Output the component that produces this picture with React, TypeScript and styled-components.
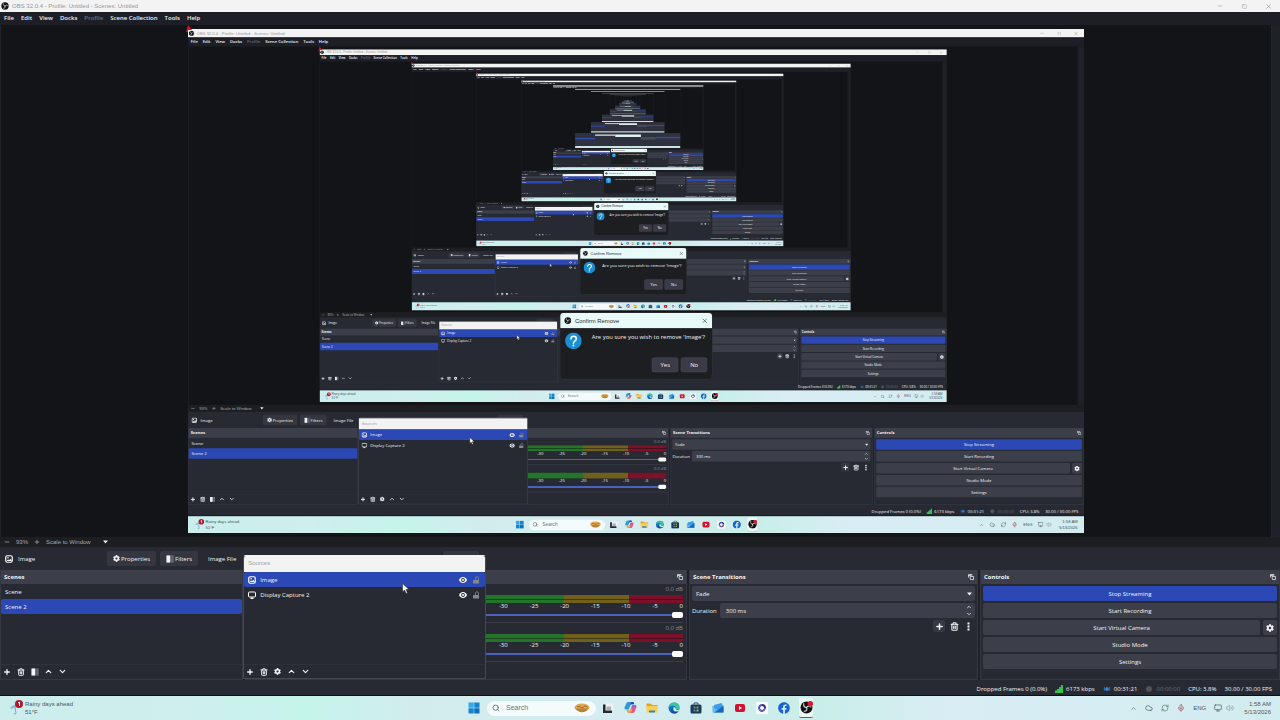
import React, { useId } from "react";
import styled, { createGlobalStyle, css } from "styled-components";
import { ChevronDown, ChevronUp, Cloud, Mic, Minus, Monitor, Plus, Search, Square, Trash2, Volume2, X, RefreshCw } from "lucide-react";
import { FaCog, FaFacebook } from "react-icons/fa";

const c = {
  window: "#1f2128",
  panel: "#272a33",
  raised: "#3c3e4a",
  blue: "#2b48b5",
  canvas: "#131418",
  line: "#353843",
  text: "#f2f3f6",
  mute: "#8b8d96",
  caption: "#f3f3f3",
};

const systemFont = `"Liberation Sans", Arial, sans-serif`;

const SCALE = 0.7;
const LAST_MIRROR = 14;
const FIRST_WITH_DIALOG = 2;
const FIRST_SILHOUETTE = 7;

const GlobalStyle = createGlobalStyle`
  *, *::before, *::after { box-sizing: border-box; }
  body { margin: 0; overflow: hidden; background: ${c.window}; }
  button, input, select { font: inherit; color: inherit; margin: 0; padding: 0; border: 0; background: none; }
  ul { list-style: none; margin: 0; padding: 0; }
  h2, p { margin: 0; font-size: inherit; }
  svg { display: block; flex: none; }
`;

const Screen = styled.div`
  position: relative;
  display: flex;
  flex-direction: column;
  width: 100vw;
  height: 100vh;
  overflow: hidden;
  background: ${c.window};
  color: ${c.text};
  font: 500 6px/8px "Open Sans", "Noto Sans", sans-serif;
  cursor: default;
`;

const TitleBar = styled.header`
  display: flex;
  align-items: center;
  gap: 3px;
  flex: none;
  height: 12px;
  padding: 0 8px 0 1px;
  background: ${c.caption};
  color: #96979b;
  font-family: ${systemFont};
`;

const TitleText = styled.span`
  flex: 1;
`;

const CaptionButtons = styled.div`
  display: flex;
  gap: 16px;
`;

const CaptionButton = styled.button`
  display: grid;
  place-items: center;
  width: 8px;
  height: 8px;
  color: #8c8c8c;
`;

const MenuBar = styled.nav`
  display: flex;
  align-items: center;
  gap: 7px;
  flex: none;
  height: 13px;
  padding: 0 4px 2px;
  background: #1d1e26;
  font-weight: 600;
`;

const MenuItem = styled.button<{ $off?: boolean }>`
  color: ${(p) => (p.$off ? "#6d6f78" : c.text)};
`;

const Preview = styled.main`
  display: flex;
  align-items: center;
  justify-content: center;
  flex: 1;
  min-height: 0;
  margin-left: 1px;
  border-right: 1px solid #24262c;
  margin-right: 8px;
  background: ${c.canvas};
  overflow: hidden;
`;

const MirrorFrame = styled.div`
  position: relative;
  flex: none;
  width: ${SCALE * 100}vw;
  height: ${SCALE * 100}vh;
`;

const MirrorSurface = styled.div`
  width: 100vw;
  height: 100vh;
  transform: scale(${SCALE});
  transform-origin: 0 0;
`;

const CornerHandle = styled.svg`
  position: absolute;
  left: -2px;
  top: -4px;
`;

const ZoomBar = styled.div`
  display: flex;
  align-items: center;
  gap: 6px;
  flex: none;
  height: 10px;
  padding: 0 4px;
  background: #1d1e22;
  color: #a5a6ac;
  font-family: ${systemFont};
`;

const ZoomMode = styled.button`
  display: flex;
  align-items: center;
  gap: 12px;
`;

const ContextBar = styled.div`
  display: flex;
  align-items: center;
  flex: none;
  height: 23px;
  padding: 0 5px;
  background: ${c.panel};
`;

const SourceName = styled.div`
  display: flex;
  align-items: center;
  gap: 5px;
  width: 102px;
`;

const ContextButton = styled.button`
  display: flex;
  align-items: center;
  justify-content: center;
  gap: 1px;
  min-width: 36px;
  height: 15px;
  padding: 0 6px;
  margin-right: 4px;
  border-radius: 2px;
  background: #343640;
`;

const FieldLabel = styled.label`
  margin-left: 6px;
`;

const PathInput = styled.input`
  width: 15%;
  height: 13px;
  margin: 0 4px 0 12px;
  border-radius: 2px;
`;

const Docks = styled.div`
  display: grid;
  grid-template-columns: 243fr 442fr 289fr 300fr;
  gap: 2px;
  flex: none;
  height: 110px;
  background: ${c.window};
`;

const DockBox = styled.section`
  display: flex;
  flex-direction: column;
  min-width: 0;
  padding-bottom: 1px;
  background: ${c.panel};
  border: 1px solid ${c.line};
  border-top: 0;
`;

const DockHeader = styled.header`
  display: flex;
  align-items: center;
  justify-content: space-between;
  flex: none;
  height: 14px;
  padding: 0 3px;
  background: ${c.raised};
  font-weight: 700;
`;

const List = styled.ul`
  flex: 1;
`;

const ListRow = styled.li<{ $on?: boolean }>`
  display: flex;
  align-items: center;
  gap: 4px;
  height: 15px;
  padding: 0 5px 0 4px;
  border-radius: 2px;
  background: ${(p) => (p.$on ? c.blue : "transparent")};
`;

const Grow = styled.span`
  flex: 1;
`;

const ToolRow = styled.div`
  display: flex;
  align-items: center;
  gap: 5px;
  flex: none;
  height: 14px;
  padding: 0 1px;
  border-top: 1px solid #2e313b;
`;

const ToolButton = styled.button<{ $filled?: boolean }>`
  display: grid;
  place-items: center;
  width: ${(p) => (p.$filled ? 12 : 9)}px;
  height: 12px;
  border-radius: 2px;
  background: ${(p) => (p.$filled ? "#363843" : "none")};
`;

const Channel = styled.div`
  display: flex;
  flex-direction: column;
  height: 39px;
  margin-right: 3px;
  padding-left: 76px;
  border-bottom: 1px solid #3a3d48;
`;

const Level = styled.span`
  padding-top: 1px;
  height: 11px;
  text-align: right;
  color: ${c.mute};
`;

const Meter = styled.div`
  height: 8px;
  background:
    linear-gradient(transparent 0 4px, rgba(10, 12, 16, 0.45) 4px 5px, transparent 5px),
    linear-gradient(to left, #7d1129 0 15%, #71601c 15% 33%, #24742a 33%);
`;

const Ticks = styled.div`
  display: flex;
  justify-content: space-between;
  align-self: flex-end;
  width: 51%;
  height: 7px;
  line-height: 7px;
`;

const Fader = styled.input`
  appearance: none;
  width: 100%;
  height: 8px;
  margin-top: 1px;
  background: linear-gradient(transparent 0 3px, #4b61bd 3px 5px, transparent 5px);
  &::-webkit-slider-thumb {
    appearance: none;
    width: 11px;
    height: 6px;
    border-radius: 2px;
    background: #fff;
  }
`;

const DockBody = styled.div`
  display: flex;
  flex-direction: column;
  gap: 2px;
  padding: 2px 2px 0;
`;

const FieldRow = styled.div`
  display: flex;
  align-items: center;
  gap: 3px;
`;

const FieldBox = styled.div`
  display: flex;
  align-items: center;
  flex: 1 0 auto;
  height: 15px;
  padding: 0 3px 0 4px;
  border-radius: 2px;
  background: ${c.raised};
`;

const Select = styled.select`
  appearance: none;
  flex: 1;
  outline: 0;
`;

const SpinInput = styled.input`
  flex: 1;
  min-width: 0;
  padding-left: 2px;
  outline: 0;
`;

const SpinButtons = styled.div`
  display: grid;
  gap: 1px;
`;

const EndRow = styled.div`
  display: flex;
  justify-content: flex-end;
  gap: 5px;
  padding-right: 2px;
`;

const ControlButton = styled.button<{ $active?: boolean; $square?: boolean }>`
  display: grid;
  place-items: center;
  height: 15px;
  border-radius: 2px;
  background: ${(p) => (p.$active ? c.blue : c.raised)};
  ${(p) => (p.$square ? css`width: 14px;` : css`flex: 1 0 auto;`)}
`;

const StatusBar = styled.footer`
  display: flex;
  align-items: center;
  justify-content: flex-end;
  gap: 8px;
  flex: none;
  height: 16px;
  padding: 2px 8px 0 0;
  background: ${c.panel};
  border-bottom: 1px solid #0e0f13;
`;

const StatusItem = styled.span<{ $off?: boolean }>`
  display: flex;
  align-items: center;
  gap: 3px;
  color: ${(p) => (p.$off ? "#686a73" : c.text)};
`;

const TaskBar = styled.div`
  display: grid;
  grid-template-columns: 1fr auto 1fr;
  align-items: center;
  flex: none;
  height: 24px;
  background: linear-gradient(to right, #cbeeed, #cfeeee 14%, #c4f4ea 24%, #d2ecee 32%, #d5ecf0 50%, #c9eee9 64%, #d8edf4 74%, #d3ecf0);
  color: #4a5560;
  font-family: ${systemFont};
`;

const Weather = styled.div`
  display: flex;
  align-items: center;
  gap: 2px;
  padding-left: 9px;
`;

const TwoLines = styled.p<{ $right?: boolean }>`
  text-align: ${(p) => (p.$right ? "right" : "left")};
`;

const Apps = styled.div`
  display: flex;
  align-items: center;
  gap: 8px;
`;

const AppButton = styled.button<{ $active?: boolean }>`
  display: grid;
  place-items: center;
  width: 14px;
  height: 20px;
  border-radius: 2px;
  background: ${(p) => (p.$active ? "rgba(255, 255, 255, 0.6)" : "none")};
  border-bottom: 1px solid ${(p) => (p.$active ? "#c4314b" : "transparent")};
`;

const SearchBox = styled.label`
  display: flex;
  align-items: center;
  gap: 6px;
  width: 109px;
  height: 15px;
  padding: 0 6px 0 5px;
  margin: 0 -3px 0 -2px;
  border-radius: 8px;
  background: #f3fbfc;
  color: #3c464e;
`;

const SearchInput = styled.input`
  flex: 1;
  min-width: 0;
  font-size: 7px;
  outline: 0;
  &::placeholder { color: #6b757c; opacity: 1; }
`;

const Tray = styled.div`
  display: flex;
  align-items: center;
  justify-content: flex-end;
  gap: 8px;
  padding-right: 9px;
`;

const TrayPair = styled.span`
  display: flex;
  gap: 4px;
  margin-right: 2px;
`;

const FloatingDock = styled.section`
  position: absolute;
  left: 19%;
  bottom: 41px;
  display: flex;
  flex-direction: column;
  width: 19%;
  height: 124px;
  border: 1px solid #454853;
  border-top-color: ${c.caption};
  border-radius: 3px 3px 0 0;
  background: ${c.panel};
  overflow: hidden;
`;

const FloatingTitle = styled.header`
  display: flex;
  align-items: center;
  flex: none;
  height: 16px;
  padding: 0 4px 2px;
  background: ${c.caption};
  color: #a0a1a5;
  font-family: ${systemFont};
`;

const RowIcons = styled.span`
  display: flex;
  gap: 5px;
`;

const Pointer = styled.svg`
  position: absolute;
  left: 31%;
  bottom: 126px;
  margin-left: 5px;
`;

const Dialog = styled.div`
  position: absolute;
  left: 38%;
  bottom: 46px;
  display: flex;
  flex-direction: column;
  width: 312px;
  height: 137px;
  margin-left: 4px;
  border: 1px solid #3a3b42;
  border-radius: 8px;
  background: #1d1e22;
  overflow: hidden;
  font-size: 12px;
  line-height: 16px;
`;

const DialogTitle = styled.header`
  display: flex;
  align-items: center;
  gap: 7px;
  height: 31px;
  flex: none;
  padding: 0 8px;
  background: #e9fbf8;
  color: #2a2c30;
  font-family: ${systemFont};
  font-weight: 400;
`;

const DialogBody = styled.div`
  display: flex;
  gap: 20px;
  flex: 1;
  padding: 9px 8px 0 10px;
`;

const DialogText = styled.p`
  padding-top: 2px;
`;

const DialogActions = styled.div`
  display: flex;
  justify-content: flex-end;
  gap: 5px;
  padding: 0 10px 14px;
`;

const DialogButton = styled.button`
  width: 54px;
  height: 30px;
  border: 1px solid #4e505e;
  border-radius: 4px;
  background: #3a3b47;
`;

const FarTitle = styled.div`
  flex: none;
  height: 13px;
  background: #e6e7e9;
`;

const FarStage = styled.div`
  display: flex;
  align-items: center;
  justify-content: center;
  flex: 1;
  min-height: 0;
  padding-top: 12px;
  overflow: hidden;
  background: ${c.canvas};
`;

const FarDocks = styled.div`
  display: grid;
  grid-template-columns: 243fr 243fr 311fr 178fr 300fr;
  align-items: start;
  flex: none;
  height: 158px;
  padding-top: 18px;
  background: #2f323e;
`;

const FarBlock = styled.div<{ $top: number; $height: number; $color: string }>`
  height: ${(p) => p.$height}px;
  margin-top: ${(p) => p.$top}px;
  background: ${(p) => p.$color};
`;

const FarTaskBar = styled.div`
  flex: none;
  height: 24px;
  background: #cfe6e8;
`;

const ObsLogo = ({ size, live }: { size: number; live?: boolean }) => (
  <svg width={size} height={size} viewBox="0 0 24 24">
    <circle cx="12" cy="12" r="11" fill="#111" />
    <g fill="none" stroke="#e8e8e8" strokeWidth="2" strokeLinecap="round">
      <path d="M12 12c-4 0-6-3-5-7" />
      <path d="M12 12c2-3 6-4 8-1" />
      <path d="M12 12c2 4 0 7-4 7" />
    </g>
    {live && <circle cx="19" cy="5" r="5" fill="#d9152f" />}
  </svg>
);

const ImageIcon = () => (
  <svg width="8" height="8" viewBox="0 0 16 16">
    <rect x="1.5" y="1.5" width="13" height="13" rx="3" fill="none" stroke="#fff" strokeWidth="2.4" />
    <path d="M3 12l3-3 2 1 3-2 3 4z" fill="#fff" />
    <circle cx="6" cy="5.500" r="1.500" fill="#fff" />
  </svg>
);

const DisplayIcon = () => (
  <svg width="8" height="8" viewBox="0 0 16 16">
    <rect x="1" y="2" width="14" height="10" rx="2" fill="none" stroke="#fff" strokeWidth="2" />
    <path d="M5 15h6M8 12v3" stroke="#fff" strokeWidth="2" />
  </svg>
);

const FilterIcon = () => (
  <svg width="8" height="8" viewBox="0 0 16 16">
    <rect x="1" y="1" width="14" height="14" rx="1" fill="#777a85" />
    <path d="M1 1h7v14H1z" fill="#f2f3f6" />
    <path d="M10 4h3M10 8h3M10 12h3" stroke="#272a33" strokeWidth="1.500" />
  </svg>
);

const FloatIcon = () => (
  <svg width="6" height="6" viewBox="0 0 12 12" fill="none" stroke="#e4e5ea" strokeWidth="1.600">
    <path d="M1 7V1h7v2M1 3h6M4 5h7v6H5z" />
  </svg>
);

const EyeIcon = () => (
  <svg width="8" height="8" viewBox="0 0 16 16">
    <path d="M0 8c3-8 13-8 16 0-3 8-13 8-16 0z" fill="#fff" />
    <circle cx="8" cy="8" r="3.800" fill="#272a33" />
    <circle cx="8" cy="8" r="2" fill="#fff" />
  </svg>
);

const LockIcon = () => (
  <svg width="8" height="8" viewBox="0 0 16 16">
    <path d="M7 8V4.500a3 3 0 0 1 6 0V8" fill="none" stroke="#85878f" strokeWidth="1.800" />
    <rect x="2" y="8" width="12" height="7" rx="1" fill="#85878f" />
  </svg>
);

const Caret = () => (
  <svg width="5" height="4" viewBox="0 0 10 8"><path d="M0 1h10L5 7z" fill="#f2f3f6" /></svg>
);

const DotsIcon = () => (
  <svg width="3" height="9" viewBox="0 0 6 18" fill="#f2f3f6">
    <rect x="1" y="1" width="4" height="4" /><rect x="1" y="7" width="4" height="4" /><rect x="1" y="13" width="4" height="4" />
  </svg>
);

const SignalIcon = () => (
  <svg width="8" height="8" viewBox="0 0 16 16" fill="#35c24a">
    <path d="M0 11h4v5H0zM4 8h4v8H4zM8 4h4v12H8zM12 0h4v16h-4z" />
  </svg>
);

const LiveIcon = ({ color }: { color: string }) => (
  <svg width="8" height="8" viewBox="0 0 16 16" fill="none" stroke={color} strokeWidth="1.500">
    <circle cx="8" cy="8" r="3" fill={color} />
    <path d="M4 4c-2 2-2 6 0 8M12 4c2 2 2 6 0 8" />
  </svg>
);

const RecordIcon = () => (
  <svg width="8" height="8" viewBox="0 0 16 16"><circle cx="8" cy="8" r="6" fill="#50525c" /></svg>
);

const WeatherIcon = () => (
  <svg width="14" height="16" viewBox="0 0 28 32">
    <path d="M2 18c2-8 12-11 19-5z" fill="#8fbbe2" />
    <path d="M12 15l2 11c0 3-4 3-4 0" fill="none" stroke="#7aa4ce" strokeWidth="2" />
    <circle cx="20" cy="8" r="8" fill="#b5152b" />
    <path d="M18 6l3-2v8" fill="none" stroke="#fff" strokeWidth="2" />
  </svg>
);

const WindowsIcon = () => (
  <svg width="12" height="12" viewBox="0 0 24 24" fill="#1583cf">
    <path d="M1 1h10.500v10.500H1z" fill="#35a7e4" /><path d="M12.500 1H23v10.500H12.500zM1 12.500h10.500V23H1z" /><path d="M12.500 12.500H23V23H12.500z" fill="#0b6fc0" />
  </svg>
);

const BreadIcon = () => (
  <svg width="16" height="10" viewBox="0 0 32 20">
    <ellipse cx="16" cy="9" rx="15" ry="8" fill="#dfa952" />
    <path d="M4 11c4 10 20 10 24 0z" fill="#b9803a" />
    <path d="M6 8c5-5 8 5 13 0s6 1 8 0" fill="none" stroke="#7c4c1c" strokeWidth="1.600" />
  </svg>
);

const TaskViewIcon = () => (
  <svg width="12" height="12" viewBox="0 0 24 24">
    <path d="M8 3h15v14H8z" fill="#eef2f3" /><path d="M2 5h5v12h13v5H2z" fill="#26292d" /><path d="M9 9h9v7H9z" fill="#a9b0b4" />
  </svg>
);

const CopilotIcon = () => (
  <svg width="13" height="13" viewBox="0 0 24 24">
    <path d="M8 2h7c2 0 3 2 3 4h-3c-2 0-3 1-4 4l-2 5H3c-3 0-2-4-1-6l2-4c1-2 2-3 4-3z" fill="#2f9ad8" />
    <path d="M13 2h3c2 0 2 1 3 4h-4c-2 0-3 0-4 3z" fill="#2346b8" />
    <path d="M16 22H9c-2 0-3-2-3-4h3c2 0 3-1 4-4l2-6h6c3 0 2 4 1 6l-2 5c-1 2-2 3-4 3z" fill="#e25a86" />
    <path d="M2 13c0 2 1 2 3 2h4l-1 3H6c-2 0-4-2-4-5z" fill="#8fca4a" />
    <path d="M6 18h3c2 0 3-1 4-4l2 2c-1 4-2 6-5 6-2 0-3-1-4-4z" fill="#f2a440" />
    <path d="M15 8h5c2 0 3 2 2 4-3-2-5-2-8 0z" fill="#a05ad0" />
  </svg>
);

const FolderIcon = () => (
  <svg width="12" height="12" viewBox="0 0 24 24">
    <path d="M1 3h8l3 3h11v5H1z" fill="#e0a21c" /><path d="M1 8h22v13H1z" fill="#fbd04f" /><path d="M6 17h12v4H6z" fill="#2c84c9" />
  </svg>
);

const EdgeIcon = () => (
  <svg width="12" height="12" viewBox="0 0 24 24">
    <circle cx="12" cy="12" r="11" fill="#1477c4" />
    <path d="M1 11C3-2 22-2 23 10c0 5-6 6-8 4 3-6-7-9-14-3z" fill="#3bc6a0" />
    <path d="M9 13c-1 6 5 9 12 6-3 4-10 6-14 2-3-4-1-8 2-8z" fill="#0c4f9c" />
    <path d="M11 11c3-1 5 1 4 3 2 3 5 2 7 1l-1 3c-6 2-12 0-10-7z" fill="#d9f0f2" />
  </svg>
);

const StoreIcon = () => (
  <svg width="12" height="12" viewBox="0 0 24 24">
    <path d="M8 5V2h8v3" fill="none" stroke="#1d5c98" strokeWidth="2" /><rect x="1" y="5" width="22" height="18" rx="3" fill="#163b5e" />
    <path d="M7 9h4v4H7z" fill="#b06a50" /><path d="M13 9h4v4h-4z" fill="#7fa050" /><path d="M7 15h4v4H7z" fill="#3c92c8" /><path d="M13 15h4v4h-4z" fill="#c8a848" />
  </svg>
);

const MailIcon = () => (
  <svg width="12" height="12" viewBox="0 0 24 24">
    <path d="M4 6l15-4 4 8v11H3z" fill="#3a9be8" /><path d="M1 8l11 8L23 7v14H4z" fill="#1767bb" /><path d="M1 8l11 8-8 5H1z" fill="#64b8f2" />
  </svg>
);

const VideoIcon = () => (
  <svg width="12" height="12" viewBox="0 0 24 24">
    <rect x="2" y="4" width="20" height="16" rx="4" fill="#d8102f" /><path d="M10 8l6 4-6 4z" fill="#fff" />
  </svg>
);

const RingIcon = () => (
  <svg width="12" height="12" viewBox="0 0 24 24" fill="none" strokeWidth="4">
    <rect width="24" height="24" rx="3" fill="#f7fafb" />
    <path d="M12 6a6 6 0 0 0-5 9" stroke="#3b55b5" /><path d="M7 15a6 6 0 0 0 11-3" stroke="#6a54a8" /><path d="M18 12a6 6 0 0 0-6-6" stroke="#3d2b78" />
  </svg>
);

const QuestionIcon = () => (
  <svg width="34" height="34" viewBox="0 0 34 34">
    <circle cx="17" cy="17" r="17" fill="#1b8fd2" />
    <path d="M12 13c0-7 11-7 11 0 0 4-6 4-6 9" fill="none" stroke="#fff" strokeWidth="3" strokeLinecap="round" />
    <circle cx="17" cy="26.500" r="2" fill="#fff" />
  </svg>
);

const MENU = ["File", "Edit", "View", "Docks", "Profile", "Scene Collection", "Tools", "Help"];
const TICKS = ["-30", "-25", "-20", "-15", "-10", "-5", "0"];
const SOURCES = [
  { name: "Image", icon: <ImageIcon />, on: true },
  { name: "Display Capture 2", icon: <DisplayIcon />, on: false },
];

function ListTools({ middle, label }: { middle: React.ReactNode; label: string }) {
  return (
    <ToolRow>
      <ToolButton aria-label="Add"><Plus size={8} strokeWidth={4} /></ToolButton>
      <ToolButton aria-label="Remove"><Trash2 size={8} strokeWidth={3} /></ToolButton>
      <ToolButton aria-label={label}>{middle}</ToolButton>
      <ToolButton aria-label="Move up"><ChevronUp size={9} strokeWidth={3} /></ToolButton>
      <ToolButton aria-label="Move down"><ChevronDown size={9} strokeWidth={3} /></ToolButton>
    </ToolRow>
  );
}

function MixerChannel({ name }: { name: string }) {
  return (
    <Channel>
      <Level>0.0 dB</Level>
      <Meter />
      <Ticks>{TICKS.map((t) => <span key={t}>{t}</span>)}</Ticks>
      <Fader type="range" min={0} max={100} defaultValue={100} aria-label={name} />
    </Channel>
  );
}

function SourcesWindow() {
  return (
    <FloatingDock>
      <FloatingTitle>Sources</FloatingTitle>
      <List>
        {SOURCES.map((s) => (
          <ListRow key={s.name} $on={s.on}>
            {s.icon}
            <Grow>{s.name}</Grow>
            <RowIcons><EyeIcon /><LockIcon /></RowIcons>
          </ListRow>
        ))}
      </List>
      <ListTools middle={<FaCog size={7} />} label="Source properties" />
    </FloatingDock>
  );
}

function ConfirmRemove() {
  return (
    <Dialog role="dialog" aria-label="Confirm Remove">
      <DialogTitle>
        <ObsLogo size={15} />
        <Grow>Confirm Remove</Grow>
        <X size={14} strokeWidth={2} />
      </DialogTitle>
      <DialogBody>
        <QuestionIcon />
        <DialogText>Are you sure you wish to remove 'Image'?</DialogText>
      </DialogBody>
      <DialogActions>
        <DialogButton>Yes</DialogButton>
        <DialogButton>No</DialogButton>
      </DialogActions>
    </Dialog>
  );
}

function WindowsTaskBar() {
  return (
    <TaskBar>
      <Weather>
        <WeatherIcon />
        <TwoLines>Rainy days ahead<br />51°F</TwoLines>
      </Weather>
      <Apps>
        <AppButton aria-label="Start"><WindowsIcon /></AppButton>
        <SearchBox>
          <Search size={8} strokeWidth={2} />
          <SearchInput placeholder="Search" aria-label="Search" />
          <BreadIcon />
        </SearchBox>
        <AppButton aria-label="Task view"><TaskViewIcon /></AppButton>
        <AppButton aria-label="Copilot"><CopilotIcon /></AppButton>
        <AppButton aria-label="File Explorer"><FolderIcon /></AppButton>
        <AppButton aria-label="Edge"><EdgeIcon /></AppButton>
        <AppButton aria-label="Store"><StoreIcon /></AppButton>
        <AppButton aria-label="Mail"><MailIcon /></AppButton>
        <AppButton aria-label="YouTube"><VideoIcon /></AppButton>
        <AppButton aria-label="Browser"><RingIcon /></AppButton>
        <AppButton aria-label="Facebook"><FaFacebook size={12} color="#1763d6" /></AppButton>
        <AppButton aria-label="OBS" $active><ObsLogo size={13} live /></AppButton>
      </Apps>
      <Tray>
        <ChevronUp size={7} />
        <Cloud size={8} />
        <RefreshCw size={8} color="#4c7a62" />
        <Mic size={8} color="#a04450" />
        <span>ENG</span>
        <TrayPair><Monitor size={8} /><Volume2 size={8} color="#87929a" /></TrayPair>
        <TwoLines $right>1:58 AM<br />5/13/2026</TwoLines>
      </Tray>
    </TaskBar>
  );
}

function Mirror({ depth }: { depth: number }) {
  if (depth > LAST_MIRROR) return null;
  return (
    <MirrorFrame aria-hidden inert>
      <MirrorSurface>
        {depth < FIRST_SILHOUETTE ? <Desktop depth={depth} /> : <FarDesktop depth={depth} />}
      </MirrorSurface>
      {depth < FIRST_SILHOUETTE && (
        <CornerHandle width="6" height="7" viewBox="0 0 6 7"><path d="M2 0l4 5H2v2H0z" fill="#d3112b" /></CornerHandle>
      )}
    </MirrorFrame>
  );
}

// Too small to carry any lettering: only the colour blocks of the window remain.
function FarDesktop({ depth }: { depth: number }) {
  return (
    <Screen>
      <FarTitle />
      <FarStage><Mirror depth={depth + 1} /></FarStage>
      <FarDocks>
        <FarBlock $top={43} $height={15} $color="#3450b8" />
        <FarBlock $top={0} $height={15} $color="#e6e7e9" />
        <FarBlock $top={0} $height={30} $color="#e4f3f0" />
        <FarBlock $top={30} $height={32} $color="#484b58" />
        <FarBlock $top={30} $height={15} $color="#3450b8" />
      </FarDocks>
      <FarTaskBar />
    </Screen>
  );
}

function Desktop({ depth }: { depth: number }) {
  const id = useId();
  const hasDialog = depth >= FIRST_WITH_DIALOG;
  return (
    <Screen>
      <TitleBar>
        <ObsLogo size={8} />
        <TitleText>OBS 32.0.4 - Profile: Untitled - Scenes: Untitled</TitleText>
        <CaptionButtons>
          <CaptionButton aria-label="Minimize"><Minus size={6} /></CaptionButton>
          <CaptionButton aria-label="Restore"><Square size={5} /></CaptionButton>
          <CaptionButton aria-label="Close"><X size={7} /></CaptionButton>
        </CaptionButtons>
      </TitleBar>
      <MenuBar>
        {MENU.map((m) => <MenuItem key={m} $off={m === "Profile"}>{m}</MenuItem>)}
      </MenuBar>

      <Preview>
        <Mirror depth={depth + 1} />
      </Preview>

      <ZoomBar>
        <Minus size={6} strokeWidth={3} />
        <span>93%</span>
        <Plus size={6} strokeWidth={3} />
        <ZoomMode>Scale to Window <Caret /></ZoomMode>
      </ZoomBar>
      <ContextBar>
        <SourceName><ImageIcon /><span>Image</span></SourceName>
        <ContextButton><FaCog size={7} />Properties</ContextButton>
        <ContextButton><FilterIcon />Filters</ContextButton>
        <FieldLabel htmlFor={id + "path"}>Image File</FieldLabel>
        <PathInput id={id + "path"} />
        <ContextButton aria-label="Browse" />
      </ContextBar>

      <Docks>
        <DockBox>
          <DockHeader><h2>Scenes</h2></DockHeader>
          <List>
            <ListRow>Scene</ListRow>
            <ListRow $on>Scene 2</ListRow>
          </List>
          <ListTools middle={<FilterIcon />} label="Scene filters" />
        </DockBox>
        <DockBox>
          <DockHeader><Grow /><FloatIcon /></DockHeader>
          {!hasDialog && (
            <>
              <MixerChannel name="Desktop volume" />
              <MixerChannel name="Microphone volume" />
            </>
          )}
        </DockBox>
        <DockBox>
          <DockHeader><h2>{hasDialog ? null : "Scene Transitions"}</h2><FloatIcon /></DockHeader>
          <DockBody>
            <FieldBox>
              <Select aria-label="Transition"><option>Fade</option></Select>
              <Caret />
            </FieldBox>
            <FieldRow>
              <label htmlFor={id}>Duration</label>
              <FieldBox>
                <SpinInput id={id} defaultValue="300 ms" />
                <SpinButtons><ChevronUp size={6} strokeWidth={3} /><ChevronDown size={6} strokeWidth={3} /></SpinButtons>
              </FieldBox>
            </FieldRow>
            <EndRow>
              <ToolButton aria-label="Add transition" $filled><Plus size={9} strokeWidth={4} /></ToolButton>
              <ToolButton aria-label="Remove transition"><Trash2 size={9} strokeWidth={3} /></ToolButton>
              <ToolButton aria-label="More"><DotsIcon /></ToolButton>
            </EndRow>
          </DockBody>
        </DockBox>
        <DockBox>
          <DockHeader><h2>Controls</h2><FloatIcon /></DockHeader>
          <DockBody>
            <ControlButton $active>Stop Streaming</ControlButton>
            <ControlButton>Start Recording</ControlButton>
            <FieldRow>
              <ControlButton>Start Virtual Camera</ControlButton>
              <ControlButton $square aria-label="Camera settings"><FaCog size={8} /></ControlButton>
            </FieldRow>
            <ControlButton>Studio Mode</ControlButton>
            <ControlButton>Settings</ControlButton>
          </DockBody>
        </DockBox>
      </Docks>

      <StatusBar>
        <StatusItem>Dropped Frames 0 (0.0%)</StatusItem>
        <StatusItem><SignalIcon />6173 kbps</StatusItem>
        <StatusItem><LiveIcon color="#3b82d6" />00:31:21</StatusItem>
        <StatusItem $off><RecordIcon />00:00:00</StatusItem>
        <StatusItem>CPU: 3.8%</StatusItem>
        <StatusItem>30.00 / 30.00 FPS</StatusItem>
      </StatusBar>
      <WindowsTaskBar />

      <SourcesWindow />
      <Pointer width="7" height="11" viewBox="0 0 14 22">
        <path d="M1 1v17l4-4 3 7 3-1-3-7h6z" fill="#fff" stroke="#1a1a1a" strokeWidth="1" />
      </Pointer>
      {hasDialog && <ConfirmRemove />}
    </Screen>
  );
}

export default function App() {
  return (
    <>
      <GlobalStyle />
      <Desktop depth={0} />
    </>
  );
}
